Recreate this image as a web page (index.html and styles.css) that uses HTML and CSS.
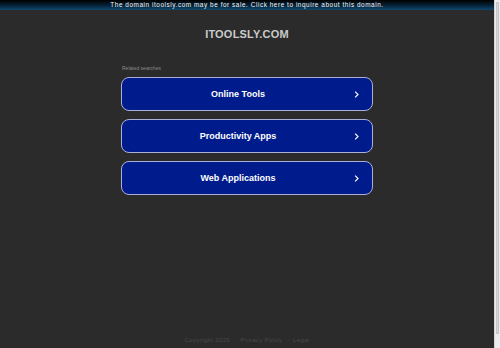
FILE: index.html
```html
<!DOCTYPE html>
<html lang="en">
<head>
    <meta charset="UTF-8">
    <meta name="viewport" content="width=device-width, initial-scale=1.0">
    <title>itoolsly.com</title>
    <link rel="stylesheet" href="styles.css">
</head>
<body>
    <!-- Faixa de venda -->
    <div class="sale-banner">The domain itoolsly.com may be for sale. Click here to inquire about this domain.</div>

    <div class="container">
        <h1 class="domain">ITOOLSLY.COM</h1>

        <div class="related">
            <p class="related-title">Related searches</p>
            <a class="search-btn" href="#">
                <span>Online Tools</span>
                <svg class="chevron" viewBox="0 0 10 10"><path d="M3.5 1.8 L6.7 5 L3.5 8.2" /></svg>
            </a>
            <a class="search-btn" href="#">
                <span>Productivity Apps</span>
                <svg class="chevron" viewBox="0 0 10 10"><path d="M3.5 1.8 L6.7 5 L3.5 8.2" /></svg>
            </a>
            <a class="search-btn" href="#">
                <span>Web Applications</span>
                <svg class="chevron" viewBox="0 0 10 10"><path d="M3.5 1.8 L6.7 5 L3.5 8.2" /></svg>
            </a>
        </div>
    </div>

    <div class="footer">Copyright 2025 &nbsp;·&nbsp; Privacy Policy &nbsp;·&nbsp; Legal</div>

    <!-- Barra de rolagem -->
    <div class="scroll-track"><div class="scroll-thumb"></div></div>
</body>
</html>
```

FILE: styles.css
```css
* {
    margin: 0;
    padding: 0;
    box-sizing: border-box;
    font-family: 'Liberation Sans', Arial, sans-serif;
}

body {
    background: #2b2b2b;
    color: #fff;
    padding-right: 6px;
}

/* Faixa superior */
.sale-banner {
    height: 10px;
    line-height: 10px;
    font-size: 6.4px;
    letter-spacing: 0.56px;
    text-align: center;
    color: #f4f6f8;
    background: linear-gradient(180deg, #000 0%, #062338 55%, #0e4a70 100%);
}

.container {
    width: 252px;
    margin: 0 auto;
}

.domain {
    margin-top: 18px;
    font-size: 11px;
    line-height: 13px;
    font-weight: bold;
    text-align: center;
    color: #cacaca;
    letter-spacing: 0.2px;
}

.related {
    margin-top: 23px;
}

.related-title {
    font-size: 5px;
    line-height: 8px;
    color: #8a8a8a;
    margin-left: 1px;
    margin-bottom: 5px;
}

.search-btn {
    display: flex;
    justify-content: center;
    align-items: center;
    position: relative;
    height: 34px;
    margin-bottom: 8px;
    padding-right: 18px;
    border: 1px solid #aab0d8;
    border-radius: 8px;
    background: #001c8c;
    color: #fff;
    font-size: 9px;
    font-weight: bold;
    text-decoration: none;
}

.chevron {
    position: absolute;
    right: 11px;
    top: 12px;
    width: 9px;
    height: 9px;
    fill: none;
    stroke: #fff;
    stroke-width: 1.3;
}

/* Rodapé */
.footer {
    margin-top: 141px;
    font-size: 6px;
    line-height: 8px;
    letter-spacing: 0.35px;
    text-align: center;
    color: #4a4a4a;
}

/* Barra de rolagem */
.scroll-track {
    position: fixed;
    top: 0;
    right: 0;
    width: 6px;
    height: 100%;
    background: #ededed;
    border-left: 1px solid #d4d4d4;
    padding: 2px 1px 14px 1px;
}

.scroll-thumb {
    height: 100%;
    background: #d6d6d6;
    border: 1px solid #c6c6c6;
}
```
